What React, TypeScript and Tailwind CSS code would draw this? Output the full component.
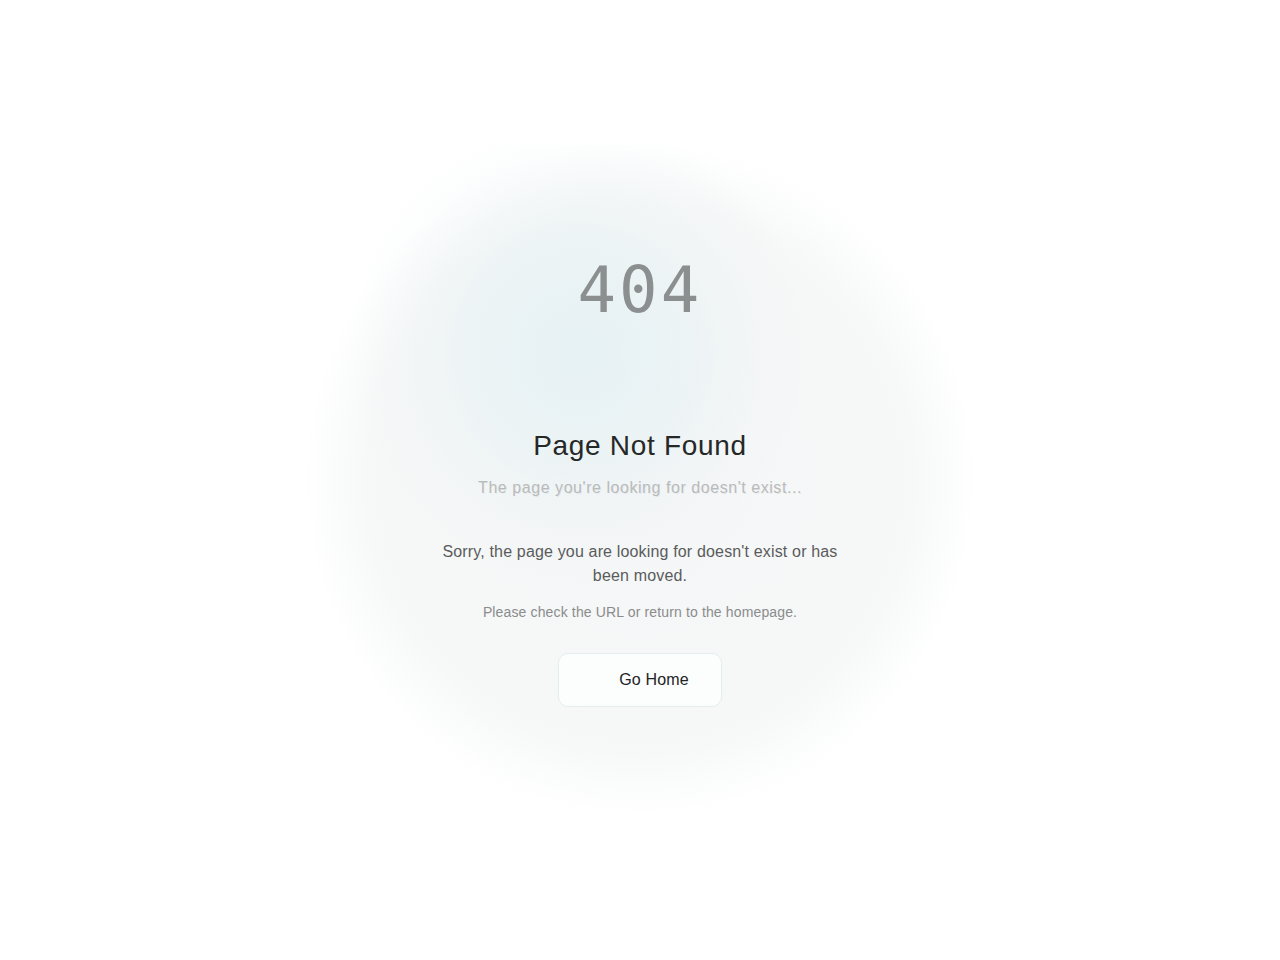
import React from 'react';

const NotFound: React.FC = () => {
  return (
    <div className="relative min-h-screen w-full overflow-hidden bg-white flex items-center justify-center font-['Liberation_Sans',Arial,sans-serif]">
      {/* soft glow behind the content */}
      <div className="pointer-events-none absolute left-1/2 top-1/2 h-[670px] w-[670px] -translate-x-1/2 -translate-y-1/2 bg-[radial-gradient(circle_at_41%_31%,rgba(229,241,243,0.95)_0%,rgba(232,242,244,0.75)_16%,rgba(237,243,245,0.35)_28%,rgba(240,244,246,0)_38%),radial-gradient(circle,#f5f6f7_0%,#f6f7f7_50%,#f7f8f8_58%,rgba(249,250,250,0.6)_65%,rgba(255,255,255,0)_71%)]" />

      <div className="relative mt-[5px] flex flex-col items-center text-center">
        <h1 className="text-[64px] leading-none tracking-wider text-[#8b8f8f] font-['DejaVu_Sans_Mono',monospace]">404</h1>

        <h2 className="mt-[106px] text-[28px] leading-9 tracking-wide text-[#262828]">Page Not Found</h2>
        <p className="mt-3 text-base leading-6 tracking-[0.55px] text-[#b9bbbb] [text-shadow:1px_1px_0_rgba(0,0,0,0.06)]">
          The page you're looking for doesn't exist...
        </p>

        <p className="mt-10 max-w-[400px] text-base leading-6 tracking-[0.16px] text-[#5a5c5c]">
          Sorry, the page you are looking for doesn't exist or has been moved.
        </p>
        <p className="mt-[14px] text-sm leading-5 tracking-[0.14px] text-[#8a8c8c]">Please check the URL or return to the homepage.</p>

        <button className="mt-[31px] flex items-center gap-2 rounded-[10px] border border-[#e5eeee] bg-white/70 px-8 py-[14px] text-base leading-6 tracking-[0.16px] text-[#222424]">
          <span className="h-5 w-5 opacity-0" />
          <span>Go Home</span>
        </button>
      </div>
    </div>
  );
};

export default function App() {
  return <NotFound />;
}
